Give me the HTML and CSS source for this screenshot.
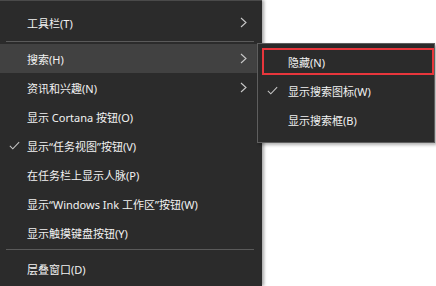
FILE: index.html
```html
<!DOCTYPE html>
<html lang="zh-CN">
<head>
  <meta charset="utf-8">
  <title>任务栏菜单</title>
  <link rel="stylesheet" href="styles.css">
</head>
<body>
  <div class="desktop">
    <div class="menu main-menu">
      <div class="item">
        <span class="check"></span>
        <span class="label">工具栏(T)</span>
        <svg class="chevron" viewBox="0 0 7 11"><polyline points="1,1 6,5.5 1,10"/></svg>
      </div>
      <div class="separator"></div>
      <div class="item active">
        <span class="check"></span>
        <span class="label">搜索(H)</span>
        <svg class="chevron" viewBox="0 0 7 11"><polyline points="1,1 6,5.5 1,10"/></svg>
      </div>
      <div class="item">
        <span class="check"></span>
        <span class="label">资讯和兴趣(N)</span>
        <svg class="chevron" viewBox="0 0 7 11"><polyline points="1,1 6,5.5 1,10"/></svg>
      </div>
      <div class="item">
        <span class="check"></span>
        <span class="label">显示 Cortana 按钮(O)</span>
      </div>
      <div class="item">
        <span class="check"><svg viewBox="0 0 13 10"><polyline points="1,5.5 4.5,9 12,1"/></svg></span>
        <span class="label">显示“任务视图”按钮(V)</span>
      </div>
      <div class="item">
        <span class="check"></span>
        <span class="label">在任务栏上显示人脉(P)</span>
      </div>
      <div class="item">
        <span class="check"></span>
        <span class="label">显示“Windows Ink 工作区”按钮(W)</span>
      </div>
      <div class="item">
        <span class="check"></span>
        <span class="label">显示触摸键盘按钮(Y)</span>
      </div>
      <div class="separator lower"></div>
      <div class="item">
        <span class="check"></span>
        <span class="label">层叠窗口(D)</span>
      </div>
    </div>

    <div class="menu sub-menu">
      <div class="item">
        <span class="check"></span>
        <span class="label">隐藏(N)</span>
      </div>
      <div class="item">
        <span class="check"><svg viewBox="0 0 13 10"><polyline points="1,5.5 4.5,9 12,1"/></svg></span>
        <span class="label">显示搜索图标(W)</span>
      </div>
      <div class="item">
        <span class="check"></span>
        <span class="label">显示搜索框(B)</span>
      </div>
      <div class="marker"></div>
    </div>
  </div>
</body>
</html>
```

FILE: styles.css
```css
body {
  margin: 0;
  background-color: #fff;
  font-family: 'Noto Sans', 'Noto Sans CJK SC', sans-serif;
  font-size: 11px;
  color: #f2f2f2;
}

.desktop {
  position: relative;
  width: 436px;
  height: 286px;
  overflow: hidden;
}

.menu {
  background-color: #2b2b2b;
  box-sizing: border-box;
}

.main-menu {
  width: 262px;
  height: 286px;
  border-top: 1px solid #4a4a4a;
  padding-top: 7px;
  box-shadow: 2px 0 3px rgba(0, 0, 0, 0.35);
}

.item {
  display: grid;
  grid-template-columns: 27px 1fr 22px;
  align-items: center;
  height: 29px;
}

.item.active {
  background-color: #414141;
}

.check {
  display: flex;
  justify-content: center;
  padding-left: 1px;
}

.check svg {
  width: 11px;
  height: 9px;
  fill: none;
  stroke: #c8c8c8;
  stroke-width: 1.2;
}

.label {
  white-space: nowrap;
}

.chevron {
  width: 7px;
  height: 11px;
  fill: none;
  stroke: #c8c8c8;
  stroke-width: 1.1;
}

.separator {
  height: 1px;
  margin: 4px 8px 2px 6px;
  background-color: #5a5a5a;
}

.separator.lower {
  margin: 2px 8px 4px 6px;
}

/* flyout for 搜索 */
.sub-menu {
  position: absolute;
  left: 257px;
  top: 43px;
  width: 178px;
  height: 100px;
  border: 1px solid #5e5e5e;
  padding-top: 3px;
  box-shadow: 2px 2px 3px rgba(0, 0, 0, 0.3);
}

.sub-menu .item {
  grid-template-columns: 30px 1fr;
}

.sub-menu .check {
  padding-left: 0;
  justify-content: flex-start;
  padding-left: 9px;
}

.marker {
  position: absolute;
  left: 4px;
  top: 4px;
  width: 172px;
  height: 27px;
  box-sizing: border-box;
  border: 2px solid #e8363c;
}
```
